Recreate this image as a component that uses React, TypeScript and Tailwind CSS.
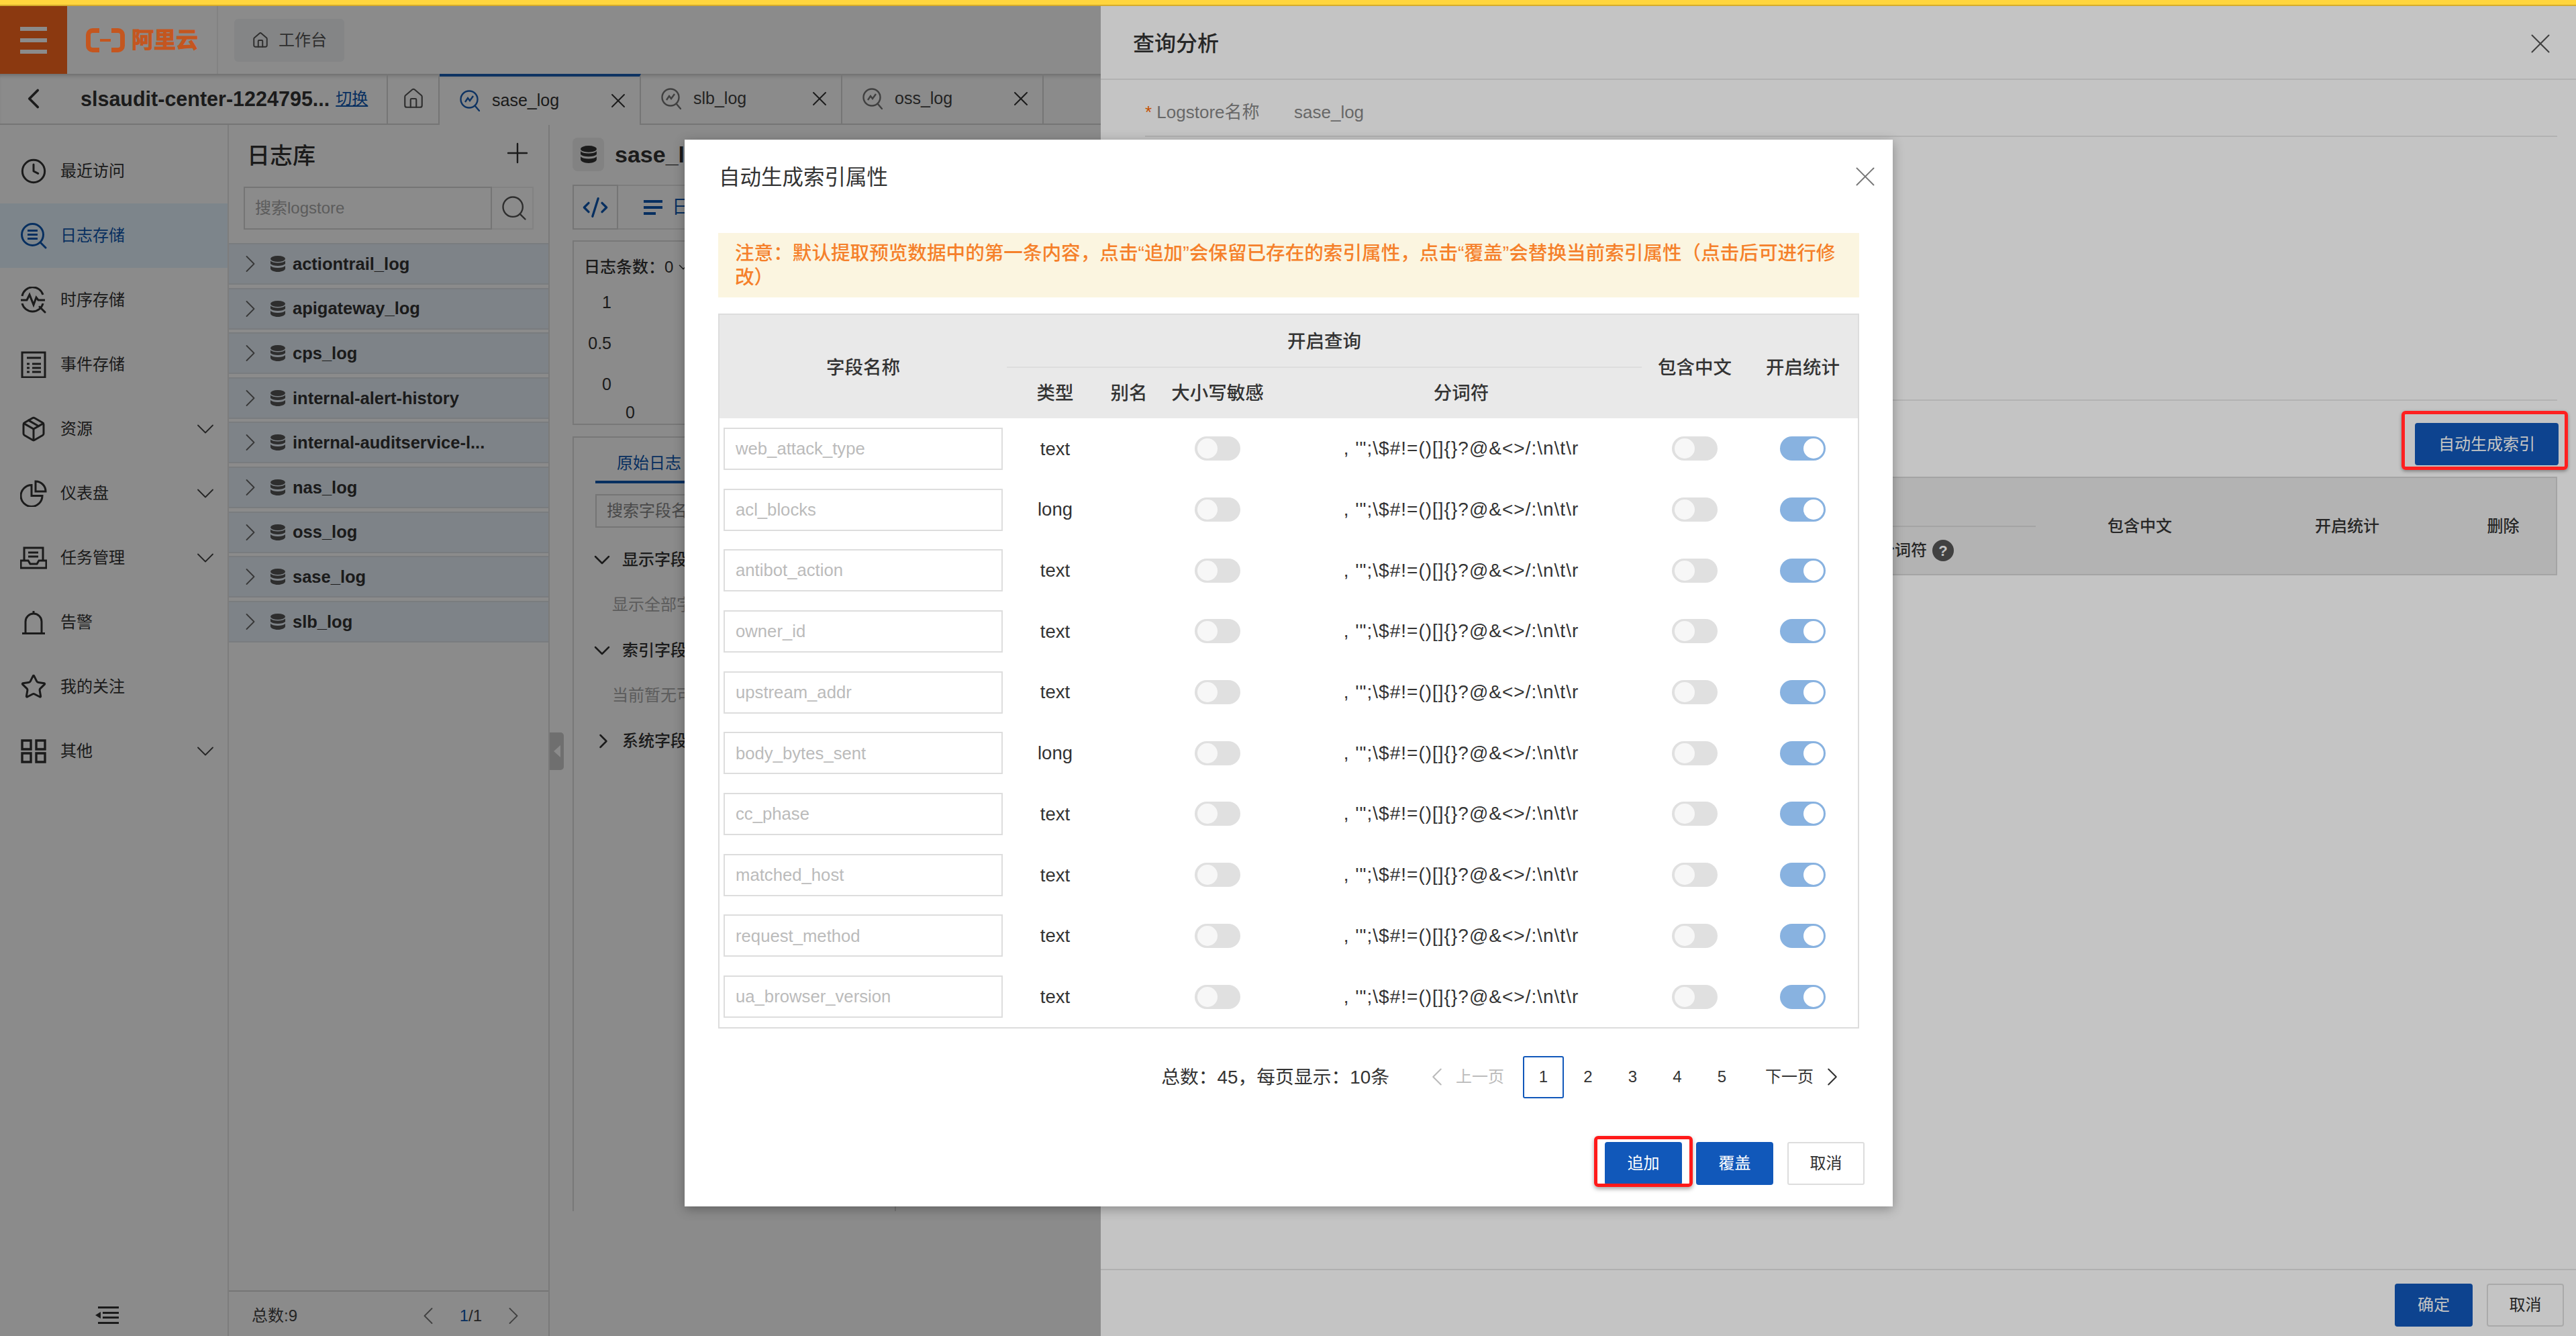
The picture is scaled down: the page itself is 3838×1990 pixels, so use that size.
import {
  ChevronDown,
  ChevronLeft,
  ChevronRight,
  Clock,
  CodeXml,
  Home,
  Package,
  Plus,
  Search,
  Star,
  X,
} from 'lucide-react';
import type { ReactNode } from 'react';

const DELIMITER = `, '";\\$#!=()[]{}?@&<>/:\\n\\t\\r`;

// full-width punctuation, kept as escapes so it cannot get normalised to ASCII
const COLON = '\uFF1A';
const COMMA = '\uFF0C';
const NOTICE = `注意${COLON}默认提取预览数据中的第一条内容${COMMA}点击“追加”会保留已存在的索引属性${COMMA}点击“覆盖”会替换当前索引属性\uFF08点击后可进行修改\uFF09`;
const PAGE_TOTAL = `总数${COLON}45${COMMA}每页显示${COLON}10条`;

const LOGSTORES = [
  'actiontrail_log',
  'apigateway_log',
  'cps_log',
  'internal-alert-history',
  'internal-auditservice-l...',
  'nas_log',
  'oss_log',
  'sase_log',
  'slb_log',
];

const FIELDS = [
  { name: 'web_attack_type', type: 'text' },
  { name: 'acl_blocks', type: 'long' },
  { name: 'antibot_action', type: 'text' },
  { name: 'owner_id', type: 'text' },
  { name: 'upstream_addr', type: 'text' },
  { name: 'body_bytes_sent', type: 'long' },
  { name: 'cc_phase', type: 'text' },
  { name: 'matched_host', type: 'text' },
  { name: 'request_method', type: 'text' },
  { name: 'ua_browser_version', type: 'text' },
];

function LogSearchIcon({ className }: { className?: string }) {
  return (
    <svg viewBox="0 0 40 40" fill="none" stroke="currentColor" strokeWidth="3" className={className}>
      <circle cx="18.5" cy="18.5" r="16" />
      <path d="M30 30l8 8" strokeLinecap="round" />
      <path d="M11 12.5h15M11 18.5h15M11 24.5h15" />
    </svg>
  );
}

function PulseSearchIcon({ className }: { className?: string }) {
  return (
    <svg viewBox="0 0 40 40" fill="none" stroke="currentColor" strokeWidth="3" className={className}>
      <path d="M3 14a16 16 0 0 1 31-2M34 25a16 16 0 0 1-31 0" />
      <path d="M1 20h9l4-8 6 15 4-11 3 4h10" />
      <path d="M29 30l8 8" strokeLinecap="round" />
    </svg>
  );
}

function EventListIcon({ className }: { className?: string }) {
  return (
    <svg viewBox="0 0 40 40" fill="none" stroke="currentColor" strokeWidth="3" className={className}>
      <path d="M3 2h34v37H3z" />
      <path d="M10 10h21M10 19h4M18 19h13M10 25h4M18 25h13M10 31h4M18 31h13" />
    </svg>
  );
}

function TaskIcon({ className }: { className?: string }) {
  return (
    <svg viewBox="0 0 40 34" fill="none" stroke="currentColor" strokeWidth="3" className={className}>
      <path d="M6 21V2h28v19" />
      <path d="M12 9h15M12 15h15" />
      <path d="M1 21h11l3 5h10l3-5h11v11H1z" />
    </svg>
  );
}

function PieIcon({ className }: { className?: string }) {
  return (
    <svg viewBox="0 0 40 40" fill="none" stroke="currentColor" strokeWidth="3" className={className}>
      <path d="M17 7.5A16 16 0 1 0 33 23.5H17z" />
      <path d="M23 2a15 15 0 0 1 15 15H23z" />
    </svg>
  );
}

function BellIcon({ className }: { className?: string }) {
  return (
    <svg viewBox="0 0 40 40" fill="none" stroke="currentColor" strokeWidth="3" className={className}>
      <path d="M8 36V19a12 12 0 0 1 24 0v17" />
      <path d="M20 3v4" />
      <path d="M3 36.5h34" />
    </svg>
  );
}

function GridIcon({ className }: { className?: string }) {
  return (
    <svg viewBox="0 0 40 40" fill="none" stroke="currentColor" strokeWidth="3.4" className={className}>
      <path d="M3 4h13v13H3zM24 4h13v13H24zM3 23h13v13H3zM24 23h13v13H24z" />
    </svg>
  );
}

function StackIcon({ className }: { className?: string }) {
  return (
    <svg viewBox="0 0 22 24" fill="currentColor" className={className}>
      <ellipse cx="11" cy="4.5" rx="11" ry="4.5" />
      <path d="M0 7.5c2 2 6 3 11 3s9-1 11-3V12c-2 2-6 3-11 3S2 14 0 12z" />
      <path d="M0 15c2 2 6 3 11 3s9-1 11-3v4c0 2.5-5 5-11 5S0 21.5 0 19z" />
    </svg>
  );
}

function CollapseIcon({ className }: { className?: string }) {
  return (
    <svg viewBox="0 0 35 26" fill="none" stroke="currentColor" strokeWidth="3" className={className}>
      <path d="M4 1.5h31M11 9.5h24M11 16.5h24M4 24.5h31" />
      <path d="M0 13l8-5v10z" fill="currentColor" stroke="none" />
    </svg>
  );
}

function AliLogo() {
  return (
    <svg viewBox="0 0 58 36" fill="none" stroke="currentColor" strokeWidth="7" className="h-[36px] w-[58px]">
      <path d="M20 3.5H10a6.5 6.5 0 0 0-6.5 6.5v16a6.5 6.5 0 0 0 6.5 6.5h10" />
      <path d="M38 3.5h10a6.5 6.5 0 0 1 6.5 6.5v16a6.5 6.5 0 0 1-6.5 6.5H38" />
      <path d="M21 18h16" strokeWidth="4" />
    </svg>
  );
}

function QueryTabIcon({ className }: { className?: string }) {
  return (
    <svg viewBox="0 0 30 32" fill="none" stroke="currentColor" strokeWidth="2.4" className={className}>
      <circle cx="14" cy="14" r="12.5" />
      <path d="M8 18l4-6 3 4 5-7" />
      <path d="M23 24l6 7" strokeLinecap="round" />
    </svg>
  );
}

function Toggle({ on }: { on?: boolean }) {
  return (
    <span
      className={
        on
          ? 'flex h-[36px] w-[68px] items-center justify-end rounded-full bg-[#88b2e0] pr-[3px]'
          : 'flex h-[36px] w-[68px] items-center justify-start rounded-full bg-[#e0e0e0] pl-[4px]'
      }
    >
      <span className={on ? 'h-[30px] w-[30px] rounded-full bg-white' : 'h-[30px] w-[30px] rounded-full bg-[#f7f7f7]'} />
    </span>
  );
}

function NavItem({
  icon,
  label,
  active,
  caret,
}: {
  icon: ReactNode;
  label: string;
  active?: boolean;
  caret?: boolean;
}) {
  return (
    <div
      className={
        active
          ? 'flex h-[96px] items-center bg-[#e6f5ff] pl-[30px] pr-[11px] text-[#0f58b0]'
          : 'flex h-[96px] items-center pl-[30px] pr-[11px] text-[#333]'
      }
    >
      <span className="flex w-[60px] shrink-0 items-center">{icon}</span>
      <span className="flex-1 text-[24px]">{label}</span>
      {caret ? <ChevronDown className="h-[44px] w-[44px] text-[#444]" strokeWidth={1} /> : null}
    </div>
  );
}

function SideTab({ label }: { label: string }) {
  return (
    <div className="flex w-[300px] shrink-0 items-center border-b-2 border-r-2 border-[#d8d8d8] pl-[30px] pr-[14px] text-[#555]">
      <QueryTabIcon className="mr-[18px] h-[32px] w-[30px] text-[#777]" />
      <span className="flex-1 text-[25px] text-[#444]">{label}</span>
      <X className="h-[36px] w-[36px] text-[#333]" strokeWidth={1.3} />
    </div>
  );
}

function FieldRow({ text, muted, open }: { text: string; muted?: boolean; open?: boolean }) {
  if (muted) {
    return <div className="flex h-[67.5px] items-center pl-[31px] text-[24px] text-[#aaa]">{text}</div>;
  }
  return (
    <div className="flex h-[67.5px] items-center text-[24px] font-medium text-[#333]">
      <span className="flex w-[46px] justify-start">
        {open ? (
          <ChevronDown className="h-[40px] w-[40px] -ml-[4px]" strokeWidth={1.5} />
        ) : (
          <ChevronRight className="h-[36px] w-[36px]" strokeWidth={1.7} />
        )}
      </span>
      {text}
    </div>
  );
}

function Page() {
  return (
    <div className="flex h-full flex-col bg-white">
      <header className="flex h-[101px] shrink-0">
        <div className="flex w-[100px] flex-col items-center justify-center gap-[11px] bg-[#ff6a20]">
          <span className="h-[6px] w-[40px] bg-white" />
          <span className="h-[6px] w-[40px] bg-white" />
          <span className="h-[6px] w-[40px] bg-white" />
        </div>
        <div className="relative z-10 flex w-[223px] items-center gap-[10px] pl-[28px] text-[#c4561f]">
          <AliLogo />
          <span className="text-[33px] font-bold leading-none [-webkit-text-stroke:1px_#c4561f]">阿里云</span>
        </div>
        <div className="flex flex-1 items-center border-l-2 border-[#eeeeee] pl-[24px]">
          <div className="flex h-[64px] w-[164px] items-center justify-center gap-[14px] rounded-[6px] bg-[#f3f6f7] text-[#555]">
            <Home className="h-[26px] w-[26px]" strokeWidth={1.8} />
            <span className="text-[24px]">工作台</span>
          </div>
        </div>
      </header>

      <div className="flex h-[76px] shrink-0 shadow-[inset_0_6px_6px_-4px_rgba(0,0,0,0.25)]">
        <div className="flex w-[578px] shrink-0 items-center border-b-2 border-r-2 border-[#d8d8d8] pl-[25px]">
          <ChevronLeft className="mr-[45px] h-[50px] w-[50px] text-[#333]" strokeWidth={1.8} />
          <span className="pt-[2px] text-[30.5px] font-bold text-[#333]">slsaudit-center-1224795...</span>
          <span className="ml-[9px] text-[24px] text-[#0f58b0] underline">切换</span>
        </div>
        <div className="flex w-[77px] shrink-0 items-center justify-center border-b-2 border-r-2 border-[#d8d8d8]">
          <Home className="h-[34px] w-[34px] text-[#555]" strokeWidth={1.5} />
        </div>
        <div className="flex w-[300px] shrink-0 items-center border-r-2 border-t-4 border-r-[#d8d8d8] border-t-[#1b5fb5] pl-[30px] pr-[14px] text-[#333]">
          <QueryTabIcon className="mr-[18px] h-[32px] w-[30px] text-[#1b5fb5]" />
          <span className="flex-1 text-[25px]">sase_log</span>
          <X className="h-[36px] w-[36px]" strokeWidth={1.3} />
        </div>
        <SideTab label="slb_log" />
        <SideTab label="oss_log" />
        <div className="flex-1 border-b-2 border-[#d8d8d8]" />
      </div>

      <div className="flex min-h-0 flex-1">
        <nav className="flex w-[341px] shrink-0 flex-col border-r-2 border-[#e6e6e6] pt-[21px]">
          <NavItem icon={<Clock className="h-[40px] w-[40px]" strokeWidth={1.8} />} label="最近访问" />
          <NavItem icon={<LogSearchIcon className="h-[40px] w-[40px]" />} label="日志存储" active />
          <NavItem icon={<PulseSearchIcon className="h-[40px] w-[40px]" />} label="时序存储" />
          <NavItem icon={<EventListIcon className="h-[40px] w-[40px]" />} label="事件存储" />
          <NavItem icon={<Package className="h-[40px] w-[40px]" strokeWidth={1.8} />} label="资源" caret />
          <NavItem icon={<PieIcon className="h-[40px] w-[40px]" />} label="仪表盘" caret />
          <NavItem icon={<TaskIcon className="h-[36px] w-[40px]" />} label="任务管理" caret />
          <NavItem icon={<BellIcon className="h-[40px] w-[40px]" />} label="告警" />
          <NavItem icon={<Star className="h-[40px] w-[40px]" strokeWidth={1.8} />} label="我的关注" />
          <NavItem icon={<GridIcon className="h-[40px] w-[40px]" />} label="其他" caret />
          <div className="mt-auto flex h-[68px] items-center justify-center pr-[20px] pt-[6px]">
            <CollapseIcon className="h-[26px] w-[35px] text-[#333]" />
          </div>
        </nav>

        <aside className="flex w-[478px] shrink-0 flex-col border-r-2 border-[#e0e0e0]">
          <div className="flex h-[92px] shrink-0 items-center justify-between pl-[27px] pr-[22px]">
            <span className="text-[34px] font-medium text-[#333]">日志库</span>
            <Plus className="mb-[8px] h-[48px] w-[48px] text-[#333]" strokeWidth={1.2} />
          </div>
          <div className="flex h-[64px] shrink-0 pl-[22px] pr-[22px]">
            <div className="flex flex-1 items-center border-2 border-[#d8d8d8] pl-[15px] text-[24px] text-[#aaa]">
              搜索logstore
            </div>
            <div className="flex w-[62px] items-center justify-center border-y-2 border-r-2 border-[#eeeeee] pl-[6px] text-[#555]">
              <Search className="h-[44px] w-[44px]" strokeWidth={1.3} />
            </div>
          </div>
          <div className="mt-[20px] flex flex-col gap-[4.6px]">
            {LOGSTORES.map((store) => (
              <div
                key={store}
                className="flex h-[62px] items-center border-y-2 border-[#dfe4ea] bg-[#e8f1fa] pl-[10px] text-[#333]"
              >
                <ChevronRight className="h-[44px] w-[44px] text-[#666]" strokeWidth={1} />
                <StackIcon className="ml-[8px] mr-[11px] h-[24px] w-[22px] text-[#555]" />
                <span className="text-[25.5px] font-bold">{store}</span>
              </div>
            ))}
          </div>
          <div className="mt-auto flex h-[68px] shrink-0 items-center border-t-2 border-[#d8d8d8] pl-[34px] pt-[6px] text-[24px] text-[#444]">
            <span className="flex-1">总数:9</span>
            <ChevronLeft className="h-[44px] w-[44px] text-[#777]" strokeWidth={1} />
            <span className="mx-[25px]">
              <span className="text-[#0f58b0]">1</span>/1
            </span>
            <ChevronRight className="mr-[30px] h-[44px] w-[44px] text-[#777]" strokeWidth={1} />
          </div>
        </aside>

        <main className="relative min-w-0 flex-1 pl-[34px]">
          <div className="absolute left-0 top-[905px] flex h-[56px] w-[21px] items-center justify-center rounded-r-[5px] bg-[#cccccc]">
            <span className="h-0 w-0 border-y-[9px] border-r-[10px] border-y-transparent border-r-white" />
          </div>
          <div className="flex h-[89px] items-start pt-[19px]">
            <span className="flex h-[50px] w-[47px] items-center justify-center rounded-[8px] bg-[#eeeeee]">
              <StackIcon className="h-[26px] w-[24px] text-[#333]" />
            </span>
            <span className="ml-[16px] text-[34px] font-bold leading-[50px] text-[#333]">sase_log</span>
          </div>
          <div className="flex h-[67px]">
            <div className="flex w-[68px] items-center justify-center border-2 border-[#d8d8d8] text-[#0f58b0]">
              <CodeXml className="h-[40px] w-[40px]" strokeWidth={2} />
            </div>
            <div className="flex w-[200px] items-center gap-[14px] border-y-2 border-r-2 border-[#e6e6e6] pl-[38px] text-[28px] text-[#0f58b0]">
              <span className="flex w-[28px] flex-col gap-[5px]">
                <span className="h-[4px] bg-[#0f58b0]" />
                <span className="h-[4px] bg-[#0f58b0]" />
                <span className="h-[4px] w-[18px] bg-[#0f58b0]" />
              </span>
              日志
            </div>
          </div>
          <div className="mr-[305px] mt-[16px] flex h-[275px] flex-col border-2 border-[#dcdcdc] pl-[15px] text-[#333]">
            <div className="flex h-[76px] items-center text-[24px] font-medium">
              日志条数{COLON}0 <ChevronDown className="ml-[4px] h-[22px] w-[22px]" strokeWidth={1.6} />
            </div>
            <div className="flex h-[61px] w-[41px] items-start justify-end text-[25px] leading-[28px]">1</div>
            <div className="flex h-[61px] w-[41px] items-start justify-end text-[25px] leading-[28px]">0.5</div>
            <div className="flex h-[42px] w-[41px] items-start justify-end text-[25px] leading-[28px]">0</div>
            <div className="w-[76px] text-right text-[25px] leading-[28px]">0</div>
          </div>
          <div className="mt-[17px] flex h-[1154px] w-[482px] flex-col border-x-2 border-t-2 border-[#dcdcdc]">
            <div className="ml-[32px] h-[68px] border-b-4 border-[#0f58b0] pl-[32px] pt-[20px] text-[24px] text-[#0f58b0]">
              原始日志
            </div>
            <div className="ml-[32px] mt-[16px] flex h-[50px] w-[400px] items-center border-2 border-[#d8d8d8] pl-[15px] text-[24px] text-[#888]">
              搜索字段名称
            </div>
            <div className="ml-[26px] mt-[14px]">
              <FieldRow text="显示字段" open />
              <FieldRow text="显示全部字段" muted />
              <FieldRow text="索引字段" open />
              <FieldRow text="当前暂无可" muted />
              <FieldRow text="系统字段" />
            </div>
          </div>
        </main>
      </div>
    </div>
  );
}

function Drawer() {
  return (
    <div className="absolute bottom-0 right-0 top-0 flex w-[2198px] flex-col bg-white">
      <div className="flex h-[110px] shrink-0 items-center justify-between border-b-2 border-[#e8e8e8] pl-[48px] pr-[28px] pt-[4px]">
        <span className="text-[32px] font-medium text-[#333]">查询分析</span>
        <X className="h-[50px] w-[50px] text-[#555]" strokeWidth={1} />
      </div>
      <div className="ml-[66px] mr-[28px] flex h-[85px] shrink-0 items-center border-b-2 border-[#e8e8e8] pt-[14px] text-[26px] text-[#888]">
        <span className="w-[222px]">
          <span className="text-[#ff6a00]">*</span> Logstore名称
        </span>
        <span>sase_log</span>
      </div>
      <div className="ml-[66px] mr-[28px] h-[393px] shrink-0 border-b-2 border-[#e8e8e8]" />
      <div className="flex h-[113px] shrink-0 items-start justify-end pr-[26px] pt-[33px]">
        <div className="flex h-[63px] w-[214px] items-center justify-center rounded-[4px] bg-[#1158ba] text-[24px] text-white">
          自动生成索引
        </div>
      </div>
      <div className="ml-[66px] mr-[28px] grid h-[147px] shrink-0 grid-cols-[1325px_310px_308px_1fr] border-2 border-[#d6d6d6] bg-[#e9e9e9] text-[24px] font-medium text-[#333]">
        <div className="flex flex-col">
          <div className="h-[73px] border-b-2 border-[#d6d6d6]" />
          <div className="flex flex-1 items-center justify-end gap-[8px] pr-[122px]">
            分词符
            <span className="flex h-[32px] w-[32px] items-center justify-center rounded-full bg-[#555] text-[22px] font-bold text-white">
              ?
            </span>
          </div>
        </div>
        <div className="flex items-center justify-center">包含中文</div>
        <div className="flex items-center justify-center">开启统计</div>
        <div className="flex items-center justify-center">删除</div>
      </div>
      <div className="min-h-0 flex-1" />
      <div className="flex h-[100px] shrink-0 items-start justify-end gap-[21px] border-t-2 border-[#e6e6e6] pr-[18px] pt-[20px]">
        <div className="flex h-[64px] w-[116px] items-center justify-center rounded-[4px] bg-[#1158ba] text-[24px] text-white">
          确定
        </div>
        <div className="flex h-[64px] w-[115px] items-center justify-center rounded-[4px] border-2 border-[#dddddd] text-[24px] text-[#333]">
          取消
        </div>
      </div>
    </div>
  );
}

function IndexDialog() {
  return (
    <div className="absolute left-[1020px] top-[199px] flex h-[1589px] w-[1800px] flex-col bg-white shadow-[0_4px_16px_rgba(0,0,0,0.3)]">
      <div className="flex h-[139px] shrink-0 items-start justify-between pl-[51px] pr-[16px] pt-[36px]">
        <span className="text-[31.5px] leading-[40px] text-[#333]">自动生成索引属性</span>
        <X className="-mt-[6px] h-[50px] w-[50px] text-[#777]" strokeWidth={0.9} />
      </div>
      <div className="mx-[50px] h-[96px] shrink-0 bg-[#fbf5e0] pl-[25px] pr-[30px] pt-[13px] text-[28.6px] font-medium leading-[35.5px] text-[#f5802a]">
        {NOTICE}
      </div>
      <div className="mx-[50px] mt-[24px] border-2 border-[#dddddd] text-[#333]">
        <div className="grid h-[154px] grid-cols-[428px_144px_76px_188px_538px_158px_164px] grid-rows-2 items-center bg-[#e9e9e9] pt-[3px] text-center text-[27.5px] font-medium">
          <div className="row-span-2">字段名称</div>
          <div className="col-span-4 flex h-full items-center justify-center border-b-2 border-[#dddddd]">开启查询</div>
          <div className="row-span-2">包含中文</div>
          <div className="row-span-2">开启统计</div>
          <div>类型</div>
          <div>别名</div>
          <div>大小写敏感</div>
          <div>分词符</div>
        </div>
        {FIELDS.map((field) => (
          <div
            key={field.name}
            className="grid h-[90.7px] grid-cols-[428px_144px_76px_188px_538px_158px_164px] items-center text-center text-[27.5px]"
          >
            <div className="pl-[6px] pr-[6px]">
              <div className="flex h-[63px] items-center border-2 border-[#dddddd] pl-[16px] text-left text-[25.7px] text-[#bbbbbb]">
                {field.name}
              </div>
            </div>
            <div>{field.type}</div>
            <div />
            <div className="flex justify-center">
              <Toggle />
            </div>
            <div className="text-[28px] tracking-[1px]">{DELIMITER}</div>
            <div className="flex justify-center">
              <Toggle />
            </div>
            <div className="flex justify-center">
              <Toggle on />
            </div>
          </div>
        ))}
      </div>
      <div className="mt-[41px] flex h-[63px] items-center justify-end pr-[67px] text-[24px] text-[#333]">
        <span className="mr-[48px] text-[27.8px]">{PAGE_TOTAL}</span>
        <ChevronLeft className="mr-[5px] h-[46px] w-[46px] text-[#bbbbbb]" strokeWidth={1.1} />
        <span className="mr-[28px] text-[#bbbbbb]">上一页</span>
        <div className="flex items-center gap-[5.5px]">
          {[1, 2, 3, 4, 5].map((page) => (
            <span
              key={page}
              className={
                page === 1
                  ? 'flex h-[63px] w-[61px] items-center justify-center rounded-[3px] border-2 border-[#1158ba]'
                  : 'flex h-[63px] w-[61px] items-center justify-center'
              }
            >
              {page}
            </span>
          ))}
        </div>
        <span className="ml-[34px]">下一页</span>
        <ChevronRight className="ml-[5px] h-[46px] w-[46px]" strokeWidth={1.1} />
      </div>
      <div className="mt-[65px] flex justify-end gap-[21px] pr-[42px] text-[24px]">
        <div className="flex h-[64px] w-[115px] items-center justify-center rounded-[4px] bg-[#1158ba] text-white">追加</div>
        <div className="flex h-[64px] w-[115px] items-center justify-center rounded-[4px] bg-[#1158ba] text-white">覆盖</div>
        <div className="flex h-[64px] w-[115px] items-center justify-center rounded-[3px] border-2 border-[#dddddd] text-[#333]">
          取消
        </div>
      </div>
    </div>
  );
}

export default function App() {
  return (
    <div className="flex h-[1990px] w-[3838px] flex-col overflow-hidden font-['Liberation_Sans','Noto_Sans_CJK_SC',sans-serif]">
      <div className="h-[9px] shrink-0 border-b-2 border-[#d4ab2c] bg-[#ffd53d]" />
      <div className="relative min-h-0 flex-1">
        <Page />
        <div className="absolute inset-0 bg-black/29" />
        <Drawer />
        <div className="absolute inset-0 bg-black/23" />
        <IndexDialog />
        {/* red marks drawn onto the screenshot */}
        <div className="absolute left-[3578px] top-[603px] h-[88px] w-[248px] rounded-[6px] border-[5px] border-[#ff2020] shadow-[0_2px_5px_rgba(0,0,0,0.35)]" />
        <div className="absolute left-[2375px] top-[1683px] h-[76px] w-[147px] rounded-[6px] border-[5px] border-[#ff1a1a] shadow-[0_3px_6px_rgba(0,0,0,0.35)]" />
      </div>
    </div>
  );
}
